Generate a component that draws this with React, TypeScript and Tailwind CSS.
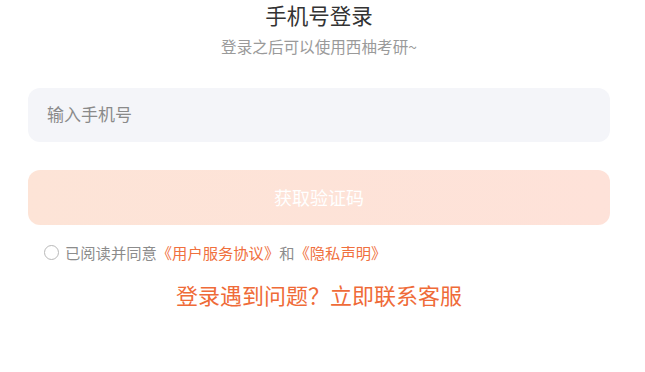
export default function App() {
  const font = { fontFamily: '"Noto Sans CJK SC", "Noto Sans", sans-serif' };

  return (
    <div className="w-[645px] h-[372px] bg-white pl-[28px] pr-[35px] overflow-hidden" style={font}>
      <div className="flex flex-col items-center">
        <h1 className="text-[21.5px] leading-[30px] text-[#333333]">手机号登录</h1>
        <p className="text-[15.6px] leading-[22px] text-[#9a9a9a] mt-[5px]">登录之后可以使用西柚考研~</p>
      </div>

      <div className="mt-[31px] h-[54px] rounded-[12px] bg-[#f4f5f9] flex items-center px-[19px]">
        <input
          type="tel"
          placeholder="输入手机号"
          className="w-full bg-transparent outline-none text-[17px] text-[#333] placeholder:text-[#8a8a8a] -mt-[2px]"
        />
      </div>

      <button
        type="button"
        className="mt-[28px] w-full h-[55px] rounded-[12px] bg-gradient-to-r from-[#fde4d7] to-[#fee2d9] text-white text-[18px] flex items-center justify-center"
      >
        获取验证码
      </button>

      <div className="mt-[17px] flex items-center pl-[16px] text-[15.3px] leading-[20px] text-[#8c8c8c]">
        <span className="w-[15px] h-[15px] rounded-full border border-[#b8b8b8] mr-[6px] shrink-0" />
        <span>
          已阅读并同意<span className="text-[#f0703e]">《用户服务协议》</span>和<span className="text-[#f0703e]">《隐私声明》</span>
        </span>
      </div>

      <div className="mt-[17px] flex justify-center">
        <span className="text-[22px] leading-[30px] text-[#ef6b38]">登录遇到问题？立即联系客服</span>
      </div>
    </div>
  );
}
